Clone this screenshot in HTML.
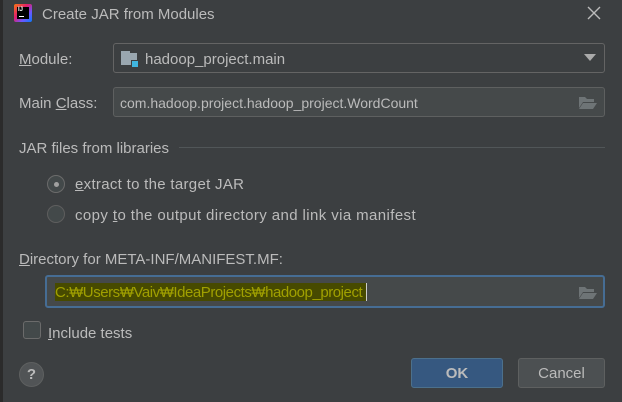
<!DOCTYPE html>
<html><head><meta charset="utf-8"><style>
*{margin:0;padding:0;box-sizing:border-box}
body{width:622px;height:402px;background:#3c3f41;font-family:"Liberation Sans","Noto Sans CJK KR",sans-serif;font-size:15px;color:#bbbbbb;position:relative;overflow:hidden}
.a{position:absolute}
.field{position:absolute;border:1px solid #5e6060;background:#45494a;border-radius:3px}
u{text-decoration:underline}
</style></head><body>
<div class="a" style="left:0;top:0;width:3px;height:402px;background:#2b2b2b"></div>
<div class="a" style="left:14px;top:4px;width:18px;height:18px;background:linear-gradient(135deg,#f97a12,#e21d6b 40%,#6b57ff 70%,#087cfa);border-radius:2px"></div>
<div class="a" style="left:17px;top:7px;width:12px;height:12px;background:#000"></div>
<div class="a" style="left:18px;top:7px;font:bold 6px 'Liberation Sans';color:#fff">IJ</div>
<div class="a" style="left:19px;top:16px;width:5px;height:1px;background:#fff"></div>
<div class="a" style="left:42px;top:6px;font-size:15px;color:#bbbbbb">Create JAR from Modules</div>
<svg class="a" style="left:587px;top:6px" width="14" height="14"><path d="M1 1L13 13M13 1L1 13" stroke="#bbbbbb" stroke-width="1.4"/></svg>

<div class="a" style="left:19px;top:51px"><u>M</u>odule:</div>
<div class="field" style="left:113px;top:43px;width:492px;height:30px;background:#3c3f41;border-color:#646464"></div>
<div class="a" style="left:121px;top:51px;width:9px;height:3px;background:#9aa7b0"></div>
<div class="a" style="left:121px;top:53px;width:16px;height:12px;background:#9aa7b0"></div>
<div class="a" style="left:131px;top:60px;width:8px;height:8px;background:#40b6e0;border:1px solid #3c3f41"></div>
<div class="a" style="left:145px;top:51px;color:#bbbbbb">hadoop_project.main</div>
<svg class="a" style="left:584px;top:54px" width="12" height="8"><path d="M0 0H12L6 7Z" fill="#aaaaaa"/></svg>

<div class="a" style="left:19px;top:95px">Main <u>C</u>lass:</div>
<div class="field" style="left:113px;top:87px;width:492px;height:30px"></div>
<div class="a" style="left:120px;top:95px;font-size:14px">com.hadoop.project.hadoop_project.WordCount</div>
<svg class="a" style="left:578px;top:95px" width="20" height="15"><path d="M1 2H7L9 4H16V7H5L1 13Z M5 8H19L15 14H1Z" fill="#6e7476"/></svg>

<div class="a" style="left:19px;top:140px">JAR files from libraries</div>
<div class="a" style="left:179px;top:147px;width:426px;height:1px;background:#515658"></div>

<div class="a" style="left:47px;top:175px;width:18px;height:18px;border-radius:50%;border:1px solid #6b6b6b;background:#43494a"></div>
<div class="a" style="left:54px;top:182px;width:5px;height:5px;border-radius:50%;background:#a0a0a0"></div>
<div class="a" style="left:75px;top:176px;letter-spacing:0.3px"><u>e</u>xtract to the target JAR</div>
<div class="a" style="left:47px;top:205px;width:18px;height:18px;border-radius:50%;border:1px solid #5e5e5e;background:#43494a"></div>
<div class="a" style="left:75px;top:207px;letter-spacing:0.4px">copy <u>t</u>o the output directory and link via manifest</div>

<div class="a" style="left:19px;top:251px"><u>D</u>irectory for META-INF/MANIFEST.MF:</div>
<div class="field" style="left:45px;top:275px;width:560px;height:33px;border:2px solid #466d94;background:#45494a"></div>
<div class="a" style="left:55px;top:283px;width:311px;height:18px;background:#474a00"></div>
<div class="a" style="left:55px;top:284px;color:#a0a000;letter-spacing:-0.45px;white-space:nowrap">C:₩Users₩Vaiv₩IdeaProjects₩hadoop_project</div>
<div class="a" style="left:366px;top:283px;width:1px;height:18px;background:#ccc"></div>
<svg class="a" style="left:578px;top:285px" width="20" height="15"><path d="M1 2H7L9 4H16V7H5L1 13Z M5 8H19L15 14H1Z" fill="#6e7476"/></svg>

<div class="a" style="left:23px;top:321px;width:18px;height:18px;border:1px solid #6b6b6b;border-radius:3px;background:#43494a"></div>
<div class="a" style="left:48px;top:325px"><u>I</u>nclude tests</div>

<div class="a" style="left:19px;top:362px;width:25px;height:25px;border-radius:50%;background:#515456;border:1px solid #5e6060;color:#bbb;font-weight:bold;font-size:15px;text-align:center;line-height:23px">?</div>
<div class="a" style="left:411px;top:358px;width:92px;height:30px;background:#365880;border:1px solid #4c708c;border-radius:3px;color:#bbbbbb;font-weight:bold;text-align:center;line-height:29px">OK</div>
<div class="a" style="left:518px;top:358px;width:87px;height:30px;background:#4c5052;border:1px solid #5e6060;border-radius:3px;color:#bbbbbb;text-align:center;line-height:29px">Cancel</div>
</body></html>
